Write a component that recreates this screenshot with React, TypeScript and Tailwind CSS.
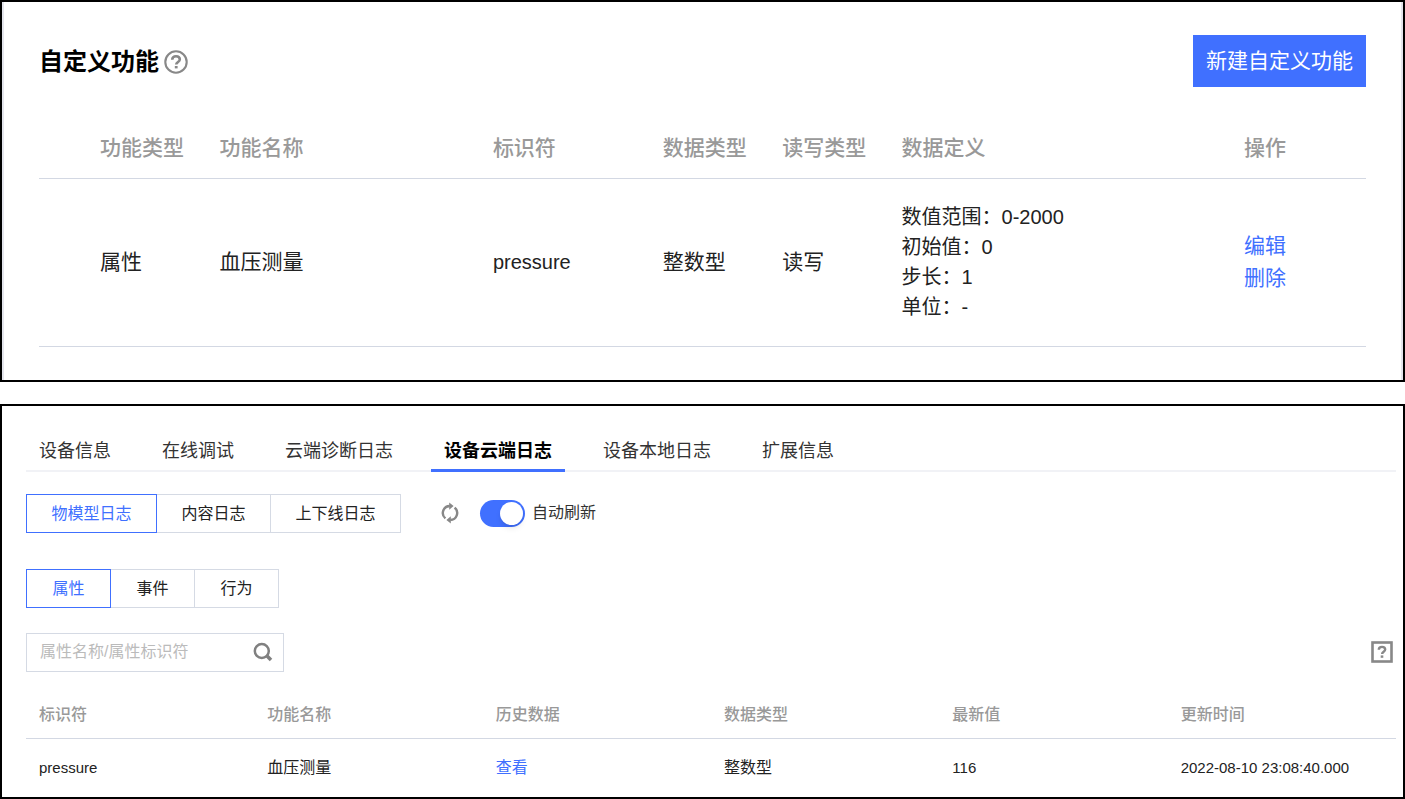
import { useState } from 'react';

const tabs = ['设备信息', '在线调试', '云端诊断日志', '设备云端日志', '设备本地日志', '扩展信息'];
const logTypes = ['物模型日志', '内容日志', '上下线日志'];
const modelTypes = ['属性', '事件', '行为'];
const logColumns = ['标识符', '功能名称', '历史数据', '数据类型', '最新值', '更新时间'];

const HelpIcon = () => (
  <svg className="h-6 w-6 text-[#888]" viewBox="0 0 24 24" fill="none" stroke="currentColor">
    <circle cx="12" cy="12" r="10.7" strokeWidth="2.1" />
    <path d="M8.2 9.7c0-2.2 1.5-3.5 3.8-3.5s3.8 1.3 3.8 3.2c0 2.5-3.6 2.6-3.6 5.2" strokeWidth="2.6" />
    <path d="M12.2 16v2.4" strokeWidth="2.8" />
  </svg>
);

const HelpBoxIcon = () => (
  <svg className="h-[22px] w-[22px] text-[#888]" viewBox="0 0 22 22" fill="none" stroke="currentColor">
    <rect x="1.5" y="1.5" width="19" height="19" strokeWidth="2.6" />
    <path d="M7.8 8.8c0-2 1.3-2.9 3.2-2.9s3.2 1.1 3.2 2.7c0 2.1-3.1 2.1-3.1 4.3" strokeWidth="2.4" />
    <path d="M11 14.4v2.4" strokeWidth="2.6" />
  </svg>
);

const RefreshIcon = () => (
  <svg className="h-[22px] w-5 text-[#888]" viewBox="0 0 20 22" fill="none" stroke="currentColor" strokeWidth="2.4">
    <path d="M5.4 16.4A7 7 0 0 1 9.8 4" />
    <path d="M14.6 5.6A7 7 0 0 1 10.2 18" />
    <path d="M9.2 0.4l4.4 3.7-4.4 3.7zM10.8 21.6l-4.4-3.7 4.4-3.7z" fill="currentColor" stroke="none" />
  </svg>
);

const SearchIcon = () => (
  <svg className="h-5 w-5 text-[#808080]" viewBox="0 0 20 20" fill="none" stroke="currentColor">
    <circle cx="8.8" cy="9" r="7" strokeWidth="2.5" />
    <path d="M13.6 13.6l4.4 4.4" strokeWidth="3.6" />
  </svg>
);

const ButtonGroup = ({ items, active, onSelect, itemClass }) => (
  <div className="flex">
    {items.map((item) => (
      <button
        key={item}
        onClick={() => onSelect(item)}
        className={`-ml-px border pt-[2px] text-[16px] leading-6 first:ml-0 ${itemClass} ${
          item === active ? 'relative border-[#4070ff] text-[#4070ff]' : 'border-[#d5dae4] text-[#222]'
        }`}
      >
        {item}
      </button>
    ))}
  </div>
);

const CustomFeatures = () => (
  <section className="border-2 border-black">
    <div className="border-x-2 border-[#e4e5ec] px-[35px] py-[33px]">
      <div className="flex items-center justify-between">
        <h2 className="flex items-center gap-[5px] pt-[2px] text-[24px] leading-8 font-bold text-black">
          自定义功能
          <HelpIcon />
        </h2>
        <button className="h-[52px] bg-[#4070ff] px-[13px] text-[21px] text-white">新建自定义功能</button>
      </div>
      <table className="mt-[30px] w-full table-fixed text-left text-[21px] text-[#222]">
        <thead>
          <tr className="h-[61px] border-b border-[#d3d8e3] text-[#999]">
            <th className="w-[12.7%] pl-[61px] font-medium">功能类型</th>
            <th className="w-[20.6%] pl-3 font-medium">功能名称</th>
            <th className="w-[12.8%] pl-3 font-medium">标识符</th>
            <th className="w-[9%] pl-3 font-medium">数据类型</th>
            <th className="w-[9%] pl-3 font-medium">读写类型</th>
            <th className="w-[25.8%] pl-3 font-medium">数据定义</th>
            <th className="pl-3 font-medium">操作</th>
          </tr>
        </thead>
        <tbody>
          <tr className="h-[168px] border-b border-[#d3d8e3]">
            <td className="pl-[61px]">属性</td>
            <td className="pl-3">血压测量</td>
            <td className="pl-3 text-[20px]">pressure</td>
            <td className="pl-3">整数型</td>
            <td className="pl-3">读写</td>
            <td className="pl-3 text-[20px] leading-[30px]">
              <p>数值范围：0-2000</p>
              <p>初始值：0</p>
              <p>步长：1</p>
              <p>单位：-</p>
            </td>
            <td className="pl-3 leading-8 text-[#4070ff]">
              <a href="#edit" className="block">编辑</a>
              <a href="#delete" className="block">删除</a>
            </td>
          </tr>
        </tbody>
      </table>
    </div>
  </section>
);

const DeviceLogs = () => {
  const [tab, setTab] = useState('设备云端日志');
  const [logType, setLogType] = useState('物模型日志');
  const [modelType, setModelType] = useState('属性');
  const [auto, setAuto] = useState(true);

  return (
    <section className="border-2 border-black pt-7 pr-[7px] pl-6">
      <nav className="flex gap-[25px] border-b-2 border-[#f1f2f6]">
        {tabs.map((t) => (
          <button
            key={t}
            onClick={() => setTab(t)}
            className={`-mb-[2px] h-[38px] border-b-3 px-[13px] text-[18px] leading-8 ${
              t === tab ? 'border-[#4070ff] font-bold text-black' : 'border-transparent text-[#333]'
            }`}
          >
            {t}
          </button>
        ))}
      </nav>

      <div className="mt-[22px] flex items-center">
        <ButtonGroup
          items={logTypes}
          active={logType}
          onSelect={setLogType}
          itemClass="h-[39px] w-[131px] nth-2:w-[115px]"
        />
        <button aria-label="刷新" className="ml-[39px]">
          <RefreshIcon />
        </button>
        <label className="ml-5 flex items-center gap-[7px] text-[16px] text-[#333]">
          <input
            type="checkbox"
            role="switch"
            checked={auto}
            onChange={() => setAuto(!auto)}
            className="h-[27px] w-[45px] appearance-none rounded-full bg-gray-300 p-[2px] before:block before:h-[23px] before:w-[23px] before:rounded-full before:bg-white before:shadow-md checked:bg-[#4070ff] checked:before:ml-auto"
          />
          自动刷新
        </label>
      </div>

      <div className="mt-9">
        <ButtonGroup items={modelTypes} active={modelType} onSelect={setModelType} itemClass="h-[39px] w-[85px]" />
      </div>

      <div className="mt-[25px] flex items-center justify-between">
        <div className="flex h-[39px] w-[258px] items-center border border-[#d5dae4] pr-[10px] pl-[13px]">
          <input
            aria-label="属性名称/属性标识符"
            placeholder="属性名称/属性标识符"
            className="min-w-0 flex-1 text-[16px] outline-none placeholder:text-[#bbb]"
          />
          <button aria-label="搜索">
            <SearchIcon />
          </button>
        </div>
        <button aria-label="帮助" className="mr-[3px]">
          <HelpBoxIcon />
        </button>
      </div>

      <table className="mt-5 w-full table-fixed text-left text-[16px] text-[#222]">
        <thead>
          <tr className="h-[47px] border-b border-[#d3d8e3] text-[#999]">
            {logColumns.map((c) => (
              <th key={c} className="pl-[13px] font-medium">{c}</th>
            ))}
          </tr>
        </thead>
        <tbody>
          <tr className="h-[58px]">
            <td className="pl-[13px] text-[15px]">pressure</td>
            <td className="pl-[13px]">血压测量</td>
            <td className="pl-[13px]">
              <a href="#history" className="text-[#4070ff]">查看</a>
            </td>
            <td className="pl-[13px]">整数型</td>
            <td className="pl-[13px] text-[15px]">116</td>
            <td className="pl-[13px] text-[15px]">2022-08-10 23:08:40.000</td>
          </tr>
        </tbody>
      </table>
    </section>
  );
};

const App = () => (
  <main className="flex flex-col gap-[22px] bg-white font-['Liberation_Sans','Noto_Sans_CJK_SC',sans-serif]">
    <CustomFeatures />
    <DeviceLogs />
  </main>
);

export default App;
